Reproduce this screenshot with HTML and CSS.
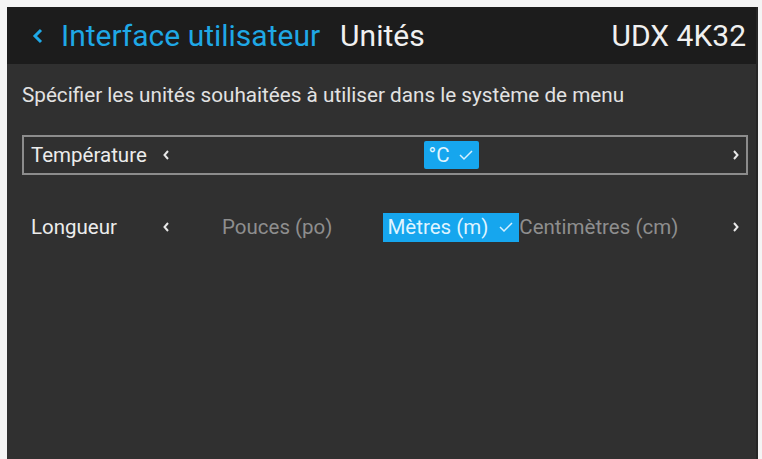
FILE: index.html
```html
<!DOCTYPE html>
<html lang="fr">
<head>
<meta charset="utf-8">
<link rel="stylesheet" href="styles.css">
</head>
<body>
<div class="screen">
  <header class="topbar">
    <div class="crumbs">
      <svg class="back" width="12" height="16" viewBox="0 0 12 16"><polyline points="9,2 3,8 9,14" fill="none" stroke="#1fa8e6" stroke-width="3"/></svg>
      <span class="parent">Interface utilisateur</span>
      <span class="current">Unités</span>
    </div>
    <div class="model">UDX 4K32</div>
  </header>
  <main class="content">
    <p class="desc">Spécifier les unités souhaitées à utiliser dans le système de menu</p>
    <div class="row row-focus">
      <span class="label">Température</span>
      <svg class="arrow" width="20" height="10" viewBox="0 0 20 10"><polyline points="5,1 1.5,5 5,9" fill="none" stroke="#e8e8e8" stroke-width="2"/></svg>
      <div class="options">
        <span class="opt opt-sel">°C <svg class="check" width="16" height="12" viewBox="0 0 16 12"><polyline points="2,6 6,10 14,2" fill="none" stroke="#d6f1ff" stroke-width="1.5"/></svg></span>
      </div>
      <svg class="arrow-r" width="10" height="10" viewBox="0 0 10 10"><polyline points="4,1 7.5,5 4,9" fill="none" stroke="#e8e8e8" stroke-width="2"/></svg>
    </div>
    <div class="row">
      <span class="label">Longueur</span>
      <svg class="arrow" width="20" height="10" viewBox="0 0 20 10"><polyline points="5,1 1.5,5 5,9" fill="none" stroke="#e8e8e8" stroke-width="2"/></svg>
      <div class="options opts-len">
        <span class="opt opt-dim">Pouces (po)</span>
        <span class="opt opt-sel">Mètres (m) <svg class="check" width="16" height="12" viewBox="0 0 16 12"><polyline points="2,6 6,10 14,2" fill="none" stroke="#d6f1ff" stroke-width="1.5"/></svg></span>
        <span class="opt opt-dim">Centimètres (cm)</span>
      </div>
      <svg class="arrow-r" width="10" height="10" viewBox="0 0 10 10"><polyline points="4,1 7.5,5 4,9" fill="none" stroke="#e8e8e8" stroke-width="2"/></svg>
    </div>
  </main>
</div>
</body>
</html>
```
FILE: styles.css
```css
html, body {
  margin: 0;
  padding: 0;
  background: #f4f4f4;
  height: 100%;
  overflow: hidden;
}
body {
  font-family: Roboto, "Liberation Sans", sans-serif;
}
.screen {
  margin: 7px 4px 0 7px;
  height: 452px;
  background: #303030;
  display: flex;
  flex-direction: column;
  border-right: 2px solid #262626;
}
.topbar {
  height: 57px;
  background: #1c1c1c;
  display: flex;
  align-items: center;
  justify-content: space-between;
  padding: 0 10px 0 25px;
}
.crumbs {
  display: flex;
  align-items: center;
}
.back {
  margin-right: 17px;
}
.parent {
  color: #1fa8e6;
  font-size: 30px;
  margin-right: 20px;
}
.current {
  color: #f0f0f0;
  font-size: 30px;
}
.model {
  color: #f0f0f0;
  font-size: 30px;
}
.content {
  padding: 0 8px 0 15px;
}
.desc {
  margin: 20px 0 0 0;
  color: #e2e2e2;
  font-size: 20.7px;
  line-height: 23px;
}
.row {
  display: flex;
  align-items: center;
  height: 40px;
  box-sizing: border-box;
  padding: 0 6px 0 7px;
  color: #ececec;
  font-size: 20.5px;
  border: 2px solid transparent;
}
.row-focus {
  margin-top: 28px;
  border-color: #8c8c8c;
}
.row + .row {
  margin-top: 32px;
}
.label {
  width: 132px;
  flex: none;
}
.arrow {
  flex: none;
}
.arrow-r {
  flex: none;
}
.options {
  flex: 1;
  display: flex;
  justify-content: center;
  align-items: center;
  padding-right: 10px;
}
.opts-len {
  justify-content: flex-start;
  padding-left: 39px;
}
.opt {
  white-space: nowrap;
}
.opt-sel {
  display: inline-flex;
  align-items: center;
  gap: 8px;
  background: #16a6ee;
  color: #dff4ff;
  padding: 0 5px 0 4px;
  border-radius: 2px;
  height: 28px;
}
.opts-len .opt-sel {
  margin-left: 51px;
  border-radius: 0;
  height: 29px;
  gap: 10px;
  padding: 0 5px 0 4px;
}
.opt-dim {
  color: #8e8e8e;
}
.check {
  display: block;
}
```
